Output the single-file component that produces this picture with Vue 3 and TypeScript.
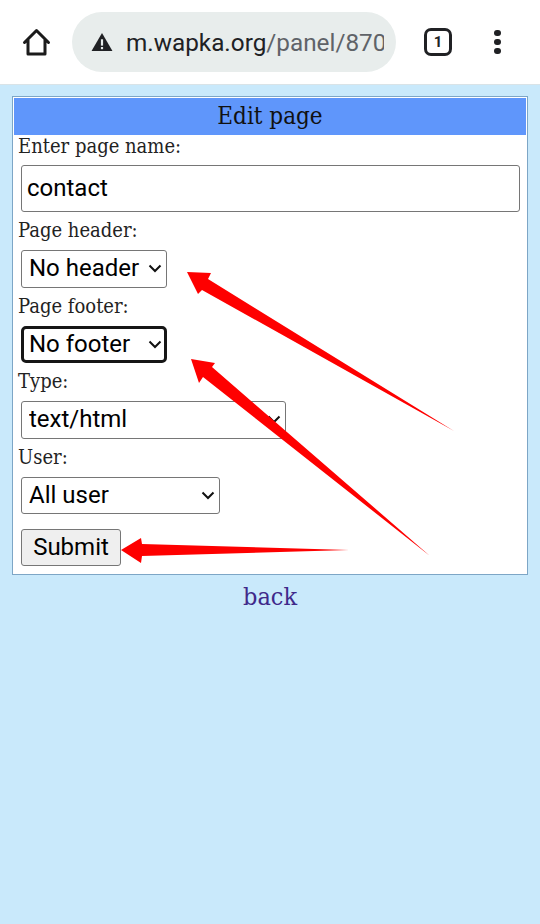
<template>
  <div class="screen">
    <header class="toolbar">
      <svg class="home" viewBox="0 0 30 30" width="30" height="30">
        <path d="M3.5 15.5 15.5 3.5 27.5 15.5M7 12.5V27h17V12.5" fill="none" stroke="#1b1b1b" stroke-width="3" stroke-linejoin="round" stroke-linecap="round" />
      </svg>
      <div class="url-pill">
        <svg class="warn" viewBox="0 0 24 22" width="22" height="20">
          <path d="M12 1 23.5 21H.5Z" fill="#202124" />
          <rect x="10.8" y="8" width="2.4" height="7" fill="#e8edec" />
          <rect x="10.8" y="16.5" width="2.4" height="2.4" fill="#e8edec" />
        </svg>
        <div class="url"><span class="host">m.wapka.org</span>/panel/8703</div>
      </div>
      <div class="tabs">1</div>
      <div class="dots"><i></i><i></i><i></i></div>
    </header>

    <main class="page">
      <form class="card" @submit.prevent>
        <h2 class="title">Edit page</h2>
        <div class="fields">
          <label class="lbl lbl-first">Enter page name:</label>
          <input class="text-input" type="text" value="contact" />

          <label class="lbl lbl-a">Page header:</label>
          <div v-for="s in selects" :key="s.value">
            <label v-if="s.label" class="lbl">{{ s.label }}</label>
            <div class="sel-wrap">
              <select class="sel" :class="{ focused: s.focused }" :style="{ width: s.width + 'px' }">
                <option>{{ s.value }}</option>
              </select>
              <svg class="chevron" viewBox="0 0 14 9" width="14" height="9">
                <path d="M1.5 1.5 7 7l5.5-5.5" fill="none" stroke="#111" stroke-width="2" />
              </svg>
            </div>
          </div>

          <button class="submit" type="submit">Submit</button>
        </div>
      </form>
      <a class="back">back</a>
    </main>

    <svg class="arrows" viewBox="0 0 540 924" width="540" height="924">
      <polygon v-for="a in arrows" :key="a" :points="a" fill="#fe0000" />
    </svg>
  </div>
</template>

<script setup lang="ts">
interface SelectRow {
  label: string
  value: string
  width: number
  focused?: boolean
}

const selects: SelectRow[] = [
  { label: '', value: 'No header', width: 146 },
  { label: 'Page footer:', value: 'No footer', width: 146, focused: true },
  { label: 'Type:', value: 'text/html', width: 265 },
  { label: 'User:', value: 'All user', width: 199 },
]

const arrows: string[] = [
  '187,272 211,273 208,279 454,431 202,290 198,294',
  '191,359 215,363 212,367 430,556 203,377 199,383',
  '121,550 141,538 142,544 349,550 142,556 141,563',
]
</script>

<style>
html, body { margin: 0; background: #c9e9fb; }
</style>

<style scoped>
.screen {
  position: relative;
  width: 540px;
  height: 924px;
  overflow: hidden;
  background: #c9e9fb;
}
.toolbar {
  display: flex;
  align-items: center;
  height: 85px;
  background: #fff;
  border-bottom: 1px solid #d9e3e7;
  box-sizing: border-box;
  padding: 0 0 0 21px;
}
.home { flex: none; margin-right: 21px; }
.url-pill {
  display: flex;
  align-items: center;
  width: 324px;
  height: 60px;
  box-sizing: border-box;
  padding: 0 12px 0 19px;
  border-radius: 30px;
  background: #e8edec;
  flex: none;
}
.warn { flex: none; margin-right: 13px; }
.url {
  flex: 1;
  overflow: hidden;
  white-space: nowrap;
  font: 24.3px "Roboto", sans-serif;
  color: #5f6368;
}
.host { color: #202124; }
.tabs {
  flex: none;
  width: 28px;
  height: 28px;
  box-sizing: border-box;
  margin-left: 28px;
  border: 3px solid #202124;
  border-radius: 7px;
  font: 700 15px/22px "Roboto", sans-serif;
  text-align: center;
  color: #202124;
}
.dots {
  flex: none;
  display: flex;
  flex-direction: column;
  gap: 2.5px;
  margin-left: 42px;
}
.dots i {
  display: block;
  width: 6.5px;
  height: 6.5px;
  border-radius: 50%;
  background: #202124;
}
.page {
  display: flex;
  flex-direction: column;
  align-items: center;
  padding-top: 11px;
}
.card {
  width: 516px;
  height: 479px;
  box-sizing: border-box;
  padding: 1px;
  border: 1px solid #7da6c6;
  background: #fff;
}
.title {
  margin: 0;
  height: 37px;
  background: #5f96fb;
  font: 400 24px/37px "DejaVu Serif", serif;
  font-stretch: condensed;
  text-align: center;
  color: #111;
}
.fields {
  display: flex;
  flex-direction: column;
  align-items: flex-start;
  padding-left: 4px;
}
.lbl {
  display: block;
  height: 22px;
  margin-top: 8px;
  margin-bottom: 8px;
  font: 20px/21px "DejaVu Serif", serif;
  font-stretch: condensed;
  color: #222;
}
.lbl-first { margin-top: 0; line-height: 23px; }
.lbl-a { margin-top: 6.5px; margin-bottom: 9.5px; line-height: 23px; }
.text-input {
  width: 499px;
  height: 47px;
  box-sizing: border-box;
  margin: 0 0 0 3px;
  padding: 0 5px 2px;
  border: 1px solid #767676;
  border-radius: 3px;
  font: 24px "Roboto", sans-serif;
  color: #000;
  background: #fff;
}
.sel-wrap {
  position: relative;
  display: flex;
  margin-left: 3px;
}
.sel {
  appearance: none;
  height: 37.5px;
  box-sizing: border-box;
  margin: 0;
  padding: 0 24px 1px 7px;
  border: 1px solid #767676;
  border-radius: 3px;
  background: #fff;
  font: 24px "Roboto", sans-serif;
  color: #000;
}
.focused {
  padding-left: 5px;
  border: 3px solid #161616;
  border-radius: 5px;
}
.chevron {
  position: absolute;
  right: 5px;
  top: 14px;
  pointer-events: none;
}
.submit {
  width: 100px;
  height: 37px;
  box-sizing: border-box;
  margin: 15px 0 0 3px;
  padding: 0 0 2px;
  border: 1px solid #767676;
  border-radius: 3px;
  background: #efefef;
  font: 24px "Roboto", sans-serif;
  color: #000;
}
.back {
  margin-top: 7px;
  font: 25px/30px "DejaVu Serif", serif;
  font-stretch: condensed;
  color: #40298a;
}
.arrows {
  position: absolute;
  left: 0;
  top: 0;
  pointer-events: none;
}
</style>
